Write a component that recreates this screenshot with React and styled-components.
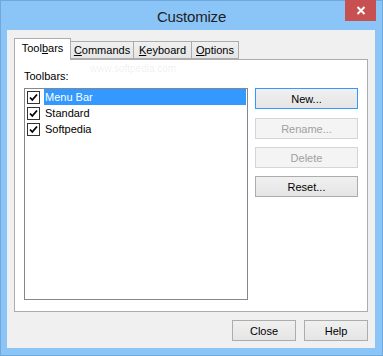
import React from "react";
import styled, { createGlobalStyle } from "styled-components";

const Global = createGlobalStyle`
  html, body { margin: 0; padding: 0; background: #8cc4f5; }
  body { font-family: "Liberation Sans", Arial, sans-serif; }
`;

const Window = styled.div`
  position: relative;
  box-sizing: border-box;
  width: 383px;
  height: 356px;
  background: #8bc5f7;
  border: 1px solid #6ea8dd;
  display: flex;
  flex-direction: column;
`;

const TitleBar = styled.div`
  height: 29px;
  display: flex;
  align-items: center;
  justify-content: center;
  font-size: 15px;
  letter-spacing: -0.2px;
  color: #1e1e1e;
  padding-top: 1px;
  box-sizing: border-box;
`;

const CloseX = styled.div`
  position: absolute;
  top: -1px;
  right: 6px;
  width: 31px;
  height: 21px;
  background: #c75050;
  display: flex;
  align-items: center;
  justify-content: center;
`;

const Client = styled.div`
  flex: 1;
  margin: 0 7px 7px 6px;
  background: #f0f0f0;
  padding: 8px 7px 0 7px;
  display: flex;
  flex-direction: column;
  position: relative;
`;

const TabRow = styled.div`
  display: flex;
  align-items: flex-end;
  height: 21px;
  position: relative;
  z-index: 1;
`;

const Tab = styled.div`
  box-sizing: border-box;
  width: ${(p) => p.$w}px;
  margin-left: ${(p) => (p.$first ? 0 : -1)}px;
  height: ${(p) => (p.$active ? 22 : 18)}px;
  margin-bottom: ${(p) => (p.$active ? -1 : 0)}px;
  border: 1px solid #acacac;
  border-bottom: ${(p) => (p.$active ? "none" : "1px solid #acacac")};
  background: ${(p) => (p.$active ? "#ffffff" : "linear-gradient(#f0f0f0, #e5e5e5)")};
  font-size: 11px;
  color: #000;
  display: flex;
  align-items: center;
  justify-content: center;
  padding-bottom: ${(p) => (p.$active ? 3 : 0)}px;
  position: relative;
  z-index: ${(p) => (p.$active ? 2 : 1)};
`;

const Panel = styled.div`
  box-sizing: border-box;
  height: 253px;
  background: #ffffff;
  border: 1px solid #acacac;
  padding: 10px 9px 0 9px;
  display: flex;
  flex-direction: column;
  position: relative;
`;

const Label = styled.div`
  font-size: 11px;
  line-height: 13px;
  height: 13px;
  margin-bottom: 5px;
  color: #000;
`;

const Body = styled.div`
  display: flex;
  gap: 7px;
`;

const ListBox = styled.div`
  box-sizing: border-box;
  width: 225px;
  height: 212px;
  border: 1px solid #828790;
  background: #fff;
  padding: 0 1px 0 0;
  display: flex;
  flex-direction: column;
`;

const Row = styled.div`
  display: flex;
  align-items: center;
  height: 16px;
`;

const Check = styled.div`
  box-sizing: border-box;
  width: 13px;
  height: 13px;
  margin: 1px 4px 0 2px;
  border: 1px solid #333333;
  background: #fff;
  display: flex;
  align-items: center;
  justify-content: center;
`;

const ItemText = styled.div`
  flex: 1;
  height: 16px;
  line-height: 16px;
  font-size: 11px;
  padding-left: 1px;
  background: ${(p) => (p.$sel ? "#3399ff" : "transparent")};
  color: ${(p) => (p.$sel ? "#fff" : "#000")};
`;

const ButtonCol = styled.div`
  display: flex;
  flex-direction: column;
`;

const Button = styled.div`
  box-sizing: border-box;
  width: ${(p) => p.$w || 103}px;
  height: 21px;
  margin-bottom: ${(p) => p.$mb || 0}px;
  border: 1px solid ${(p) => (p.$default ? "#3399ff" : p.$disabled ? "#d5d5d5" : "#acacac")};
  background: ${(p) => (p.$disabled ? "#f4f4f4" : "linear-gradient(#f0f0f0, #e5e5e5)")};
  color: ${(p) => (p.$disabled ? "#a0a0a0" : "#000")};
  font-size: 11px;
  display: flex;
  align-items: center;
  justify-content: center;
`;

const Footer = styled.div`
  display: flex;
  justify-content: flex-end;
  gap: 8px;
  margin-top: 8px;
`;

const Watermark = styled.div`
  position: absolute;
  left: ${(p) => p.$x}px;
  top: ${(p) => p.$y}px;
  font-size: ${(p) => p.$size}px;
  color: rgba(120, 120, 120, 0.12);
  pointer-events: none;
  white-space: nowrap;
`;

const CheckMark = () => (
  <svg width="9" height="9" viewBox="0 0 9 9">
    <path d="M1 4.5 L3.3 7 L8 1.5" stroke="#000" strokeWidth="1.8" fill="none" />
  </svg>
);

const items = [
  { name: "Menu Bar", sel: true },
  { name: "Standard" },
  { name: "Softpedia" },
];

export default function App() {
  return (
    <>
      <Global />
      <Window>
        <TitleBar>Customize</TitleBar>
        <CloseX>
          <svg width="10" height="9" viewBox="0 0 10 9">
            <path d="M1.5 1 L8.5 8 M8.5 1 L1.5 8" stroke="#fff" strokeWidth="2" />
          </svg>
        </CloseX>
        <Client>
          <TabRow>
            <Tab $first $active $w={57}>
              Tool<u>b</u>ars
            </Tab>
            <Tab $w={64}>
              <u>C</u>ommands
            </Tab>
            <Tab $w={59}>
              <u>K</u>eyboard
            </Tab>
            <Tab $w={48}>
              <u>O</u>ptions
            </Tab>
          </TabRow>
          <Panel>
            <Watermark $x={75} $y={3} $size={10}>
              www.softpedia.com
            </Watermark>
            <Label>Toolbars:</Label>
            <Body>
              <ListBox>
                {items.map((it) => (
                  <Row key={it.name}>
                    <Check>
                      <CheckMark />
                    </Check>
                    <ItemText $sel={it.sel}>{it.name}</ItemText>
                  </Row>
                ))}
              </ListBox>
              <ButtonCol>
                <Button $default $mb={9}>New...</Button>
                <Button $disabled $mb={8}>Rename...</Button>
                <Button $disabled $mb={8}>Delete</Button>
                <Button>Reset...</Button>
              </ButtonCol>
            </Body>
          </Panel>
          <Footer>
            <Button $w={64}>Close</Button>
            <Button $w={64}>Help</Button>
          </Footer>
        </Client>
      </Window>
    </>
  );
}
